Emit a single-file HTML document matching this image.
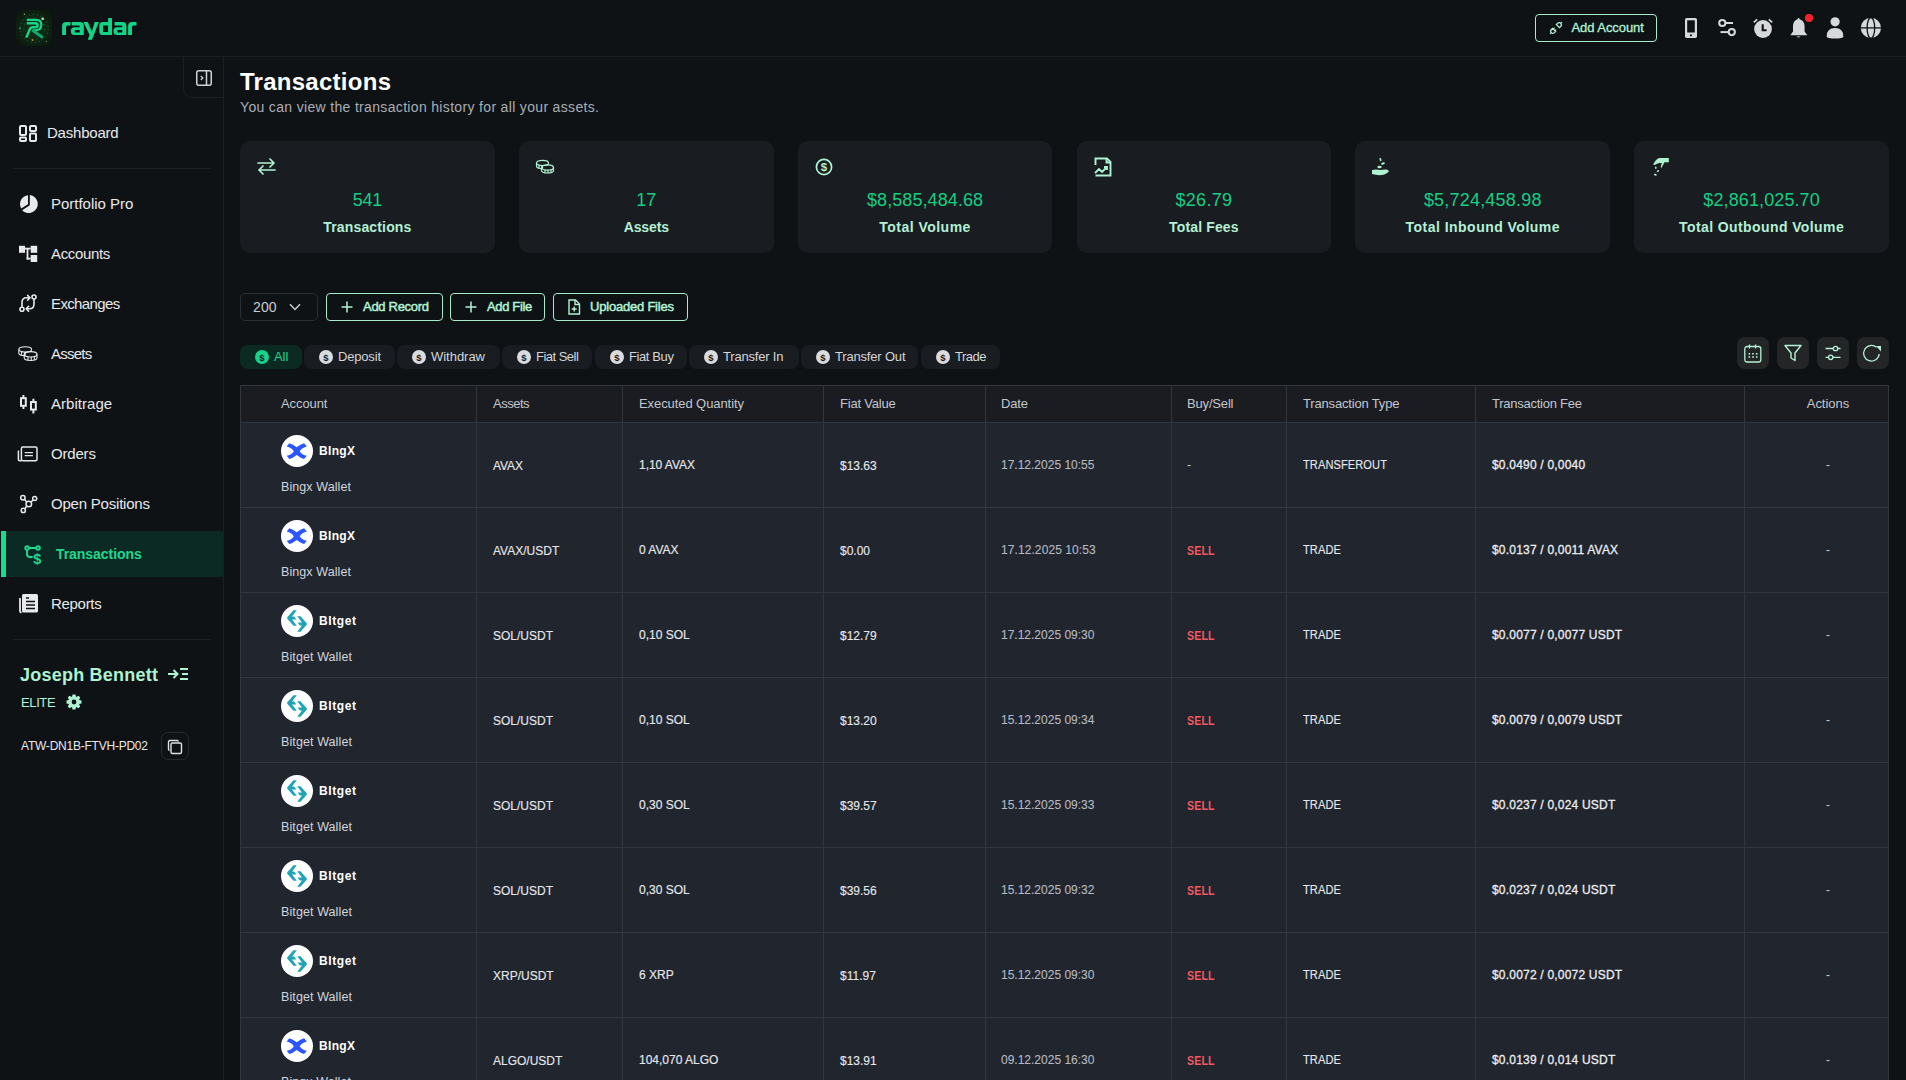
<!DOCTYPE html>
<html><head><meta charset="utf-8">
<style>
*{box-sizing:border-box;margin:0;padding:0}
html,body{width:1906px;height:1080px;overflow:hidden;background:#0e1215;font-family:"Liberation Sans", sans-serif;position:relative}
.a{position:absolute}
.t{position:absolute;white-space:nowrap}
svg{display:block;overflow:visible}
</style></head><body>
<div class="a" style="left:0px;top:56px;width:1906px;height:1px;background:#1c1f22"></div>
<svg class="a" style="left:16px;top:10px;" width="36" height="36" viewBox="0 0 36 36">
<defs><radialGradient id="lg" cx="50%" cy="50%" r="65%"><stop offset="0" stop-color="#11361a"/><stop offset="1" stop-color="#0a170d"/></radialGradient></defs>
<rect x="0" y="0" width="36" height="36" rx="8" fill="url(#lg)"/>
<circle cx="18.2" cy="18.6" r="14" fill="none" stroke="#1a8a4c" stroke-width="0.7" stroke-dasharray="1.5 2.5" opacity="0.8"/>
<circle cx="18.2" cy="18.6" r="10.5" fill="none" stroke="#16703e" stroke-width="0.6" stroke-dasharray="3 3" opacity="0.7"/>
<path d="M10.8 9.9 H20.5 Q25.3 9.9 25.3 15 Q25.3 20.2 19.5 20.2 H16.5" fill="none" stroke="#17d68b" stroke-width="2.1"/>
<path d="M10.8 13.3 H19.3 Q21.6 13.3 21.6 15.3 Q21.6 17.3 19.3 17.3 H16.8 Q14.6 17.3 13.8 19.2 L10.3 27.6" fill="none" stroke="#17d68b" stroke-width="2.4"/>
<path d="M16.5 20.2 L26.8 27.6" fill="none" stroke="#13a86c" stroke-width="3"/>
<circle cx="26.7" cy="8.7" r="1.3" fill="#d8f0d8" opacity="0.9"/><circle cx="8.4" cy="4.3" r="0.8" fill="#9fc99f" opacity="0.8"/><circle cx="3.9" cy="18.4" r="0.8" fill="#9fb79f" opacity="0.7"/>
<circle cx="16.5" cy="30" r="0.9" fill="#d88a20"/><circle cx="30.4" cy="31.5" r="0.7" fill="#8fa98f" opacity="0.7"/>
</svg>
<svg class="a" style="left:58px;top:14px;" width="82" height="28" viewBox="0 0 82 28"><g fill="#12d487" fill-rule="evenodd"><path d="M4.1 21.1 V12 Q4.1 8 8.3 8 H12.5 V11.6 H9.6 Q8 11.6 8 13.2 V21.1 Z"/><path d="M14 8 H22 Q25.8 8 25.8 11.8 V21.1 H16.5 Q12.9 21.1 12.9 17.6 V16.8 Q12.9 13.3 16.5 13.3 H21.7 V12.3 Q21.7 11.6 21 11.6 H14 Z M16.8 16.1 H21.7 V18.5 H16.8 Z"/><path d="M25.4 8 H29.7 L33.9 17.6 L36.6 8 H40.9 L34 25.8 H29.7 L31.6 21.1 Z"/><path d="M50.1 3.9 H54 V21.1 H45 Q41.3 21.1 41.3 17.4 V11.7 Q41.3 8 45 8 H50.1 Z M45 11.6 H50.1 V18 H45 Z"/><path transform="translate(42.6 0)" d="M14 8 H22 Q25.8 8 25.8 11.8 V21.1 H16.5 Q12.9 21.1 12.9 17.6 V16.8 Q12.9 13.3 16.5 13.3 H21.7 V12.3 Q21.7 11.6 21 11.6 H14 Z M16.8 16.1 H21.7 V18.5 H16.8 Z"/><path transform="translate(66 0)" d="M4.1 21.1 V12 Q4.1 8 8.3 8 H12.5 V11.6 H9.6 Q8 11.6 8 13.2 V21.1 Z"/></g></svg>
<div class="a" style="left:1535px;top:14px;width:122px;height:28px;border:1px solid #a6eccb;border-radius:4px"></div>
<svg class="a" style="left:1548px;top:20px;" width="16" height="16" viewBox="0 0 16 16"><g transform="scale(0.8) rotate(-45 10 10)" fill="none" stroke="#b3f2d6" stroke-width="1.5" stroke-linecap="round"><path d="M4.6 7.2 H6.6 V12.8 H4.6 A2.8 2.8 0 0 1 4.6 7.2 Z"/><path d="M1.8 10 H0"/><path d="M6.6 8.6 H8.2 M6.6 11.4 H8.2"/><path d="M13.4 7.2 H15.4 A2.8 2.8 0 0 1 15.4 12.8 H13.4 Z"/><path d="M18.2 10 H20"/></g></svg>
<div class="t" style="left:1571.5px;top:21.00px;font-size:13px;line-height:13px;color:#b3f2d6;font-weight:normal;-webkit-text-stroke:0.3px #b3f2d6;letter-spacing:-0.060px">Add Account</div>
<svg class="a" style="left:1685px;top:18px;" width="12" height="20" viewBox="0 0 12 20"><rect x="0" y="0" width="12" height="20" rx="1.8" fill="#d6d8dc"/><rect x="2.2" y="2.3" width="7.6" height="12.2" fill="#0e1115"/><circle cx="6" cy="17.3" r="1.1" fill="#0e1115"/></svg>
<svg class="a" style="left:1717px;top:18px;" width="20" height="20" viewBox="0 0 20 20"><circle cx="5.3" cy="5" r="3.1" fill="none" stroke="#d6d8dc" stroke-width="2"/><path d="M8.4 5 H16" stroke="#d6d8dc" stroke-width="2"/><circle cx="14.8" cy="14.1" r="3.1" fill="none" stroke="#d6d8dc" stroke-width="2"/><path d="M3.5 14.1 H11.7" stroke="#d6d8dc" stroke-width="2"/></svg>
<svg class="a" style="left:1752px;top:17px;" width="22" height="22" viewBox="0 0 22 22"><circle cx="11" cy="12" r="8.9" fill="#d6d8dc"/><path d="M10.7 7.2 V13.3 H14.6" fill="none" stroke="#0e1115" stroke-width="2.1"/><path d="M1.8 5.4 L5.2 2.4 M20.2 5.4 L16.8 2.4" fill="none" stroke="#d6d8dc" stroke-width="1.7"/></svg>
<svg class="a" style="left:1790px;top:17px;" width="18" height="21" viewBox="0 0 18 21"><path d="M8.5 1 Q9.5 1 9.6 2.2 Q14.5 3.5 14.6 9.5 V14.5 L17.3 18.2 H0.3 L3 14.5 V9.5 Q3 3.5 7.5 2.2 Q7.6 1 8.5 1 Z" fill="#d6d8dc"/><path d="M6.5 19.4 Q8.5 21.6 10.5 19.4 Z" fill="#d6d8dc"/></svg>
<svg class="a" style="left:1805px;top:14px;" width="8" height="8" viewBox="0 0 8 8"><circle cx="4" cy="4" r="4.1" fill="#f5222d"/></svg>
<svg class="a" style="left:1826px;top:17px;" width="18" height="22" viewBox="0 0 18 22"><circle cx="9.1" cy="4.8" r="4.6" fill="#d6d8dc"/><path d="M0.7 19.5 Q0.5 11 9 11 Q17.5 11 17.3 19.5 Q17 21.6 9 21.6 Q1 21.6 0.7 19.5 Z" fill="#d6d8dc"/></svg>
<svg class="a" style="left:1860px;top:17px;" width="22" height="22" viewBox="0 0 22 22"><circle cx="10.9" cy="10.9" r="10.1" fill="#d6d8dc"/><path d="M0.5 10.9 H21.5" stroke="#0e1115" stroke-width="1.3"/><ellipse cx="10.9" cy="10.9" rx="3.8" ry="10.4" fill="none" stroke="#0e1115" stroke-width="1.3"/></svg>
<div class="a" style="left:223px;top:57px;width:1px;height:1023px;background:#1c1f22"></div>
<div class="a" style="left:183px;top:56px;width:41px;height:42px;border-left:1px solid #1c1f22;border-bottom:1px solid #1c1f22;border-bottom-left-radius:9px"></div>
<svg class="a" style="left:196px;top:70px;" width="16" height="16" viewBox="0 0 16 16"><rect x="0.75" y="0.75" width="14.5" height="14.5" rx="2" fill="none" stroke="#d0d2d6" stroke-width="1.5"/><path d="M10.5 1 V15" stroke="#d0d2d6" stroke-width="1.5"/><path d="M4.8 6 L6.8 8 L4.8 10" fill="none" stroke="#d0d2d6" stroke-width="1.3"/></svg>
<svg class="a" style="left:19px;top:125px;" width="18" height="17" viewBox="0 0 18 17"><g fill="none" stroke="#e8e9ec" stroke-width="2"><rect x="1" y="1" width="6" height="9" rx="1"/><rect x="11" y="1" width="6" height="5" rx="1"/><rect x="1" y="12.5" width="6" height="3.5" rx="1"/><rect x="11" y="8.5" width="6" height="7.5" rx="1"/></g></svg>
<div class="t" style="left:47px;top:125.10px;font-size:15px;line-height:15px;color:#e8e9ec;font-weight:normal;;letter-spacing:-0.211px">Dashboard</div>
<svg class="a" style="left:19px;top:194px;" width="20" height="20" viewBox="0 0 20 20"><path d="M9 1.2 V10.3 L2.2 14.6 A9 9 0 0 1 9 1.2 Z" fill="#e8e9ec"/><path d="M10.8 1.1 A9 9 0 1 1 3.2 16.2 L10.8 11.3 Z" fill="#e8e9ec"/></svg>
<div class="t" style="left:51px;top:196.30px;font-size:15px;line-height:15px;color:#e8e9ec;font-weight:normal;;letter-spacing:-0.021px">Portfolio Pro</div>
<svg class="a" style="left:19px;top:245px;" width="19" height="18" viewBox="0 0 19 18"><g fill="#e8e9ec"><rect x="0" y="0.8" width="6" height="7"/><rect x="11.7" y="0.8" width="6.5" height="7"/><rect x="11.7" y="10" width="6.5" height="7"/><rect x="6" y="2.7" width="5.7" height="1.8"/><rect x="7.6" y="4" width="1.8" height="10.5"/><rect x="7.6" y="12.7" width="4.1" height="1.8"/></g></svg>
<div class="t" style="left:51px;top:246.30px;font-size:15px;line-height:15px;color:#e8e9ec;font-weight:normal;;letter-spacing:-0.358px">Accounts</div>
<svg class="a" style="left:19px;top:294px;" width="18" height="19" viewBox="0 0 18 19"><g fill="none" stroke="#e8e9ec" stroke-width="1.6" stroke-linecap="round" stroke-linejoin="round"><circle cx="3" cy="15.2" r="2"/><circle cx="15" cy="3" r="2"/><path d="M3 13 V8.5 Q3 3.8 7.5 3.8 H10.8 M8.6 1.4 L11 3.8 L8.6 6.2"/><path d="M15 5.2 V10 Q15 14.8 10.5 14.8 H7.3 M9.6 12.4 L7.2 14.8 L9.6 17.2"/></g></svg>
<div class="t" style="left:51px;top:296.30px;font-size:15px;line-height:15px;color:#e8e9ec;font-weight:normal;;letter-spacing:-0.627px">Exchanges</div>
<svg class="a" style="left:18px;top:346px;" width="20" height="16" viewBox="0 0 20 16"><g fill="none" stroke="#e8e9ec" stroke-width="1.1"><ellipse cx="7.2" cy="3.4" rx="6.4" ry="2.7"/><path d="M0.8 3.4 V6.9 Q0.8 9.6 7.2 9.6"/><ellipse cx="12.6" cy="8.3" rx="6.4" ry="2.7"/><path d="M6.2 8.3 V11.8 Q6.2 14.5 12.6 14.5 Q19 14.5 19 11.8 V8.3"/><path d="M3.5 5.8 V8.8 M7.2 6.1 V9.4 M10 11 V14.2 M13.2 11 V14.4 M16.4 10.6 V13.8"/></g></svg>
<div class="t" style="left:51px;top:346.30px;font-size:15px;line-height:15px;color:#e8e9ec;font-weight:normal;;letter-spacing:-0.763px">Assets</div>
<svg class="a" style="left:20px;top:395px;" width="17" height="19" viewBox="0 0 17 19"><g fill="none" stroke="#e8e9ec" stroke-width="2"><rect x="1" y="3.2" width="4.8" height="7.6"/><path d="M3.4 0 V3.2 M3.4 10.8 V14"/><rect x="11" y="7" width="4.8" height="7.6"/><path d="M13.4 3.8 V7 M13.4 14.6 V18.5"/></g></svg>
<div class="t" style="left:51px;top:396.30px;font-size:15px;line-height:15px;color:#e8e9ec;font-weight:normal;;letter-spacing:0.041px">Arbitrage</div>
<svg class="a" style="left:17px;top:446px;" width="21" height="16" viewBox="0 0 21 16"><g fill="none" stroke="#e8e9ec" stroke-width="1.5"><rect x="4.4" y="1" width="15.6" height="13.7" rx="1.5"/><path d="M4.4 14.7 H2.6 Q1.4 14.7 1.4 13.5 V4.4"/><path d="M7.7 6.6 H15.9 M7.7 9.6 H15.9" stroke-width="1.3"/></g></svg>
<div class="t" style="left:51px;top:446.30px;font-size:15px;line-height:15px;color:#e8e9ec;font-weight:normal;;letter-spacing:-0.189px">Orders</div>
<svg class="a" style="left:19px;top:494px;" width="20" height="20" viewBox="0 0 20 20"><g fill="none" stroke="#e8e9ec" stroke-width="1.5"><circle cx="3.9" cy="3.8" r="2.2"/><circle cx="15.7" cy="4.5" r="2"/><circle cx="9.8" cy="10" r="2.8"/><circle cx="4.3" cy="16.4" r="2.1"/><path d="M5.5 5.4 L7.8 8 M14.2 6 L11.9 8.1 M7.9 12 L5.8 14.8"/></g></svg>
<div class="t" style="left:51px;top:496.30px;font-size:15px;line-height:15px;color:#e8e9ec;font-weight:normal;;letter-spacing:-0.210px">Open Positions</div>
<div class="a" style="left:1px;top:531px;width:222px;height:46px;background:#0c2a24"></div>
<div class="a" style="left:1px;top:531px;width:5px;height:46px;background:#17dd90"></div>
<svg class="a" style="left:24px;top:545px;" width="20" height="20" viewBox="0 0 20 20"><g fill="none" stroke="#1ed98f" stroke-width="1.9" stroke-linecap="round"><circle cx="3" cy="3" r="1.8"/><circle cx="14" cy="3" r="1.8"/><path d="M4.8 3 H12.2 M3 4.8 V9 Q3 12 6 12 H8"/></g><text x="9.3" y="18.5" font-family="Liberation Sans" font-weight="bold" font-size="14.5" fill="#1ed98f">$</text></svg>
<div class="t" style="left:56px;top:547.15px;font-size:14px;line-height:14px;color:#1ed98f;font-weight:bold;;letter-spacing:-0.052px">Transactions</div>
<svg class="a" style="left:19px;top:594px;" width="19" height="19" viewBox="0 0 19 19"><rect x="3" y="0" width="16" height="18.5" rx="1.5" fill="#e8e9ec"/><path d="M1 4 V17 Q1 18.5 2.5 18.5" fill="none" stroke="#e8e9ec" stroke-width="1.8"/><g stroke="#0e1115" stroke-width="1.6"><path d="M7 4 H10 M7 7.5 H16 M7 11 H16 M7 14.5 H16"/></g></svg>
<div class="t" style="left:51px;top:596.30px;font-size:15px;line-height:15px;color:#e8e9ec;font-weight:normal;;letter-spacing:-0.305px">Reports</div>
<div class="a" style="left:13px;top:168px;width:198px;height:1px;background:#1e2126"></div>
<div class="a" style="left:13px;top:639px;width:198px;height:1px;background:#1e2126"></div>
<div class="t" style="left:20px;top:665.76px;font-size:18px;line-height:18px;color:#aef2d2;font-weight:bold;;letter-spacing:0.228px">Joseph Bennett</div>
<svg class="a" style="left:168px;top:668px;" width="21" height="12" viewBox="0 0 21 12"><g fill="none" stroke="#aef2d2" stroke-width="2"><path d="M0 6 H9 M5.5 2 L9.5 6 L5.5 10"/><path d="M12 1 H20 M14 6 H20 M12 11 H20"/></g></svg>
<div class="t" style="left:21px;top:696.00px;font-size:13px;line-height:13px;color:#aef2d2;font-weight:normal;;letter-spacing:-0.381px">ELITE</div>
<svg class="a" style="left:66px;top:694px;" width="16" height="16" viewBox="0 0 16 16"><g fill="#aef2d2"><circle cx="8" cy="8" r="5.2"/><path d="M6.5 0.5 H9.5 L10 3 L12.5 1.8 L14.2 3.5 L13 6 L15.5 6.5 V9.5 L13 10 L14.2 12.5 L12.5 14.2 L10 13 L9.5 15.5 H6.5 L6 13 L3.5 14.2 L1.8 12.5 L3 10 L0.5 9.5 V6.5 L3 6 L1.8 3.5 L3.5 1.8 L6 3 Z"/></g><circle cx="8" cy="8" r="2.4" fill="#0e1115"/></svg>
<div class="t" style="left:21px;top:739.84px;font-size:12px;line-height:12px;color:#e8e9ec;font-weight:normal;;letter-spacing:-0.230px">ATW-DN1B-FTVH-PD02</div>
<div class="a" style="left:161px;top:732px;width:28px;height:28px;border:1px solid #272a2f;border-radius:7px"></div>
<svg class="a" style="left:167px;top:739px;" width="16" height="16" viewBox="0 0 16 16"><g fill="none" stroke="#e0e2e5" stroke-width="1.4"><rect x="4" y="4" width="10.5" height="10.5" rx="1.5"/><path d="M11.5 2.5 Q11 1.5 10 1.5 H3 Q1.5 1.5 1.5 3 V10 Q1.5 11 2.5 11.5"/></g></svg>
<div class="t" style="left:240px;top:69.68px;font-size:24px;line-height:24px;color:#ffffff;font-weight:bold;;letter-spacing:0.267px">Transactions</div>
<div class="t" style="left:240px;top:99.65px;font-size:14px;line-height:14px;color:#a9aeb6;font-weight:normal;;letter-spacing:0.333px">You can view the transaction history for all your assets.</div>
<div class="a" style="left:240.00px;top:141px;width:254.83px;height:112px;background:#191c20;border-radius:10px"></div>
<div class="t" style="left:167.41666666666669px;width:400px;text-align:center;top:190.76px;font-size:18px;line-height:18px;color:#14cf85;font-weight:normal;;letter-spacing:-0.273px">541</div>
<div class="t" style="left:167.41666666666669px;width:400px;text-align:center;top:220.15px;font-size:14px;line-height:14px;color:#b3f0d6;font-weight:bold;;letter-spacing:0.148px">Transactions</div>
<svg class="a" style="left:257.0px;top:157px;" width="19" height="19" viewBox="0 0 19 19"><g fill="none" stroke="#aef2d2" stroke-width="1.7" stroke-linecap="round" stroke-linejoin="round"><path d="M1 6 H17 M13 2 L17 6 L13 10"/><path d="M18 13 H2 M6 9 L2 13 L6 17"/></g></svg>
<div class="a" style="left:518.83px;top:141px;width:254.83px;height:112px;background:#191c20;border-radius:10px"></div>
<div class="t" style="left:446.25px;width:400px;text-align:center;top:190.76px;font-size:18px;line-height:18px;color:#14cf85;font-weight:normal;">17</div>
<div class="t" style="left:446.25px;width:400px;text-align:center;top:220.15px;font-size:14px;line-height:14px;color:#b3f0d6;font-weight:bold;;letter-spacing:-0.124px">Assets</div>
<svg class="a" style="left:534.8333333333334px;top:159px;" width="22" height="16" viewBox="0 0 22 16"><g fill="none" stroke="#aef2d2" stroke-width="1.2"><ellipse cx="7.5" cy="4" rx="6" ry="2.6"/><path d="M1.5 4 V7 Q1.5 9.6 7.5 9.6"/><ellipse cx="12.5" cy="8.5" rx="6" ry="2.6"/><path d="M6.5 8.5 V11.5 Q6.5 14 12.5 14 Q18.5 14 18.5 11.5 V8.5"/><path d="M4 6 V9 M7.5 6.6 V9.6 M10 10.5 V13.5 M13 11 V14 M16 10.5 V13.5"/></g></svg>
<div class="a" style="left:797.67px;top:141px;width:254.83px;height:112px;background:#191c20;border-radius:10px"></div>
<div class="t" style="left:725.0833333333334px;width:400px;text-align:center;top:190.76px;font-size:18px;line-height:18px;color:#14cf85;font-weight:normal;;letter-spacing:0.090px">$8,585,484.68</div>
<div class="t" style="left:725.0833333333334px;width:400px;text-align:center;top:220.15px;font-size:14px;line-height:14px;color:#b3f0d6;font-weight:bold;;letter-spacing:0.470px">Total Volume</div>
<svg class="a" style="left:814.6666666666667px;top:158px;" width="18" height="18" viewBox="0 0 18 18"><circle cx="9" cy="9" r="7.6" fill="none" stroke="#aef2d2" stroke-width="1.7"/><text x="9" y="13.3" text-anchor="middle" font-family="Liberation Sans" font-weight="bold" font-size="11.5" fill="#aef2d2">$</text></svg>
<div class="a" style="left:1076.50px;top:141px;width:254.83px;height:112px;background:#191c20;border-radius:10px"></div>
<div class="t" style="left:1003.9166666666667px;width:400px;text-align:center;top:190.76px;font-size:18px;line-height:18px;color:#14cf85;font-weight:normal;;letter-spacing:0.287px">$26.79</div>
<div class="t" style="left:1003.9166666666667px;width:400px;text-align:center;top:220.15px;font-size:14px;line-height:14px;color:#b3f0d6;font-weight:bold;;letter-spacing:0.144px">Total Fees</div>
<svg class="a" style="left:1093.5px;top:157px;" width="18" height="20" viewBox="0 0 18 20"><g fill="none" stroke="#aef2d2" stroke-width="1.9"><path d="M1.5 8 V1.5 H13 L16.5 5 V18.5 H1.5"/><path d="M12.5 1.5 V5.5 H16.5"/><path d="M1 16 L5 12 L8 15 L13 10 M10 10 H13 V13"/></g></svg>
<div class="a" style="left:1355.33px;top:141px;width:254.83px;height:112px;background:#191c20;border-radius:10px"></div>
<div class="t" style="left:1282.7500000000002px;width:400px;text-align:center;top:190.76px;font-size:18px;line-height:18px;color:#14cf85;font-weight:normal;;letter-spacing:0.198px">$5,724,458.98</div>
<div class="t" style="left:1282.7500000000002px;width:400px;text-align:center;top:220.15px;font-size:14px;line-height:14px;color:#b3f0d6;font-weight:bold;;letter-spacing:0.478px">Total Inbound Volume</div>
<svg class="a" style="left:1371.3333333333335px;top:157px;" width="20" height="20" viewBox="0 0 20 20"><g fill="#aef2d2"><path d="M1 13 Q5 12 9 13 L14 12.5 Q17 12 18 14 Q16 17 11 18 Q6 18.5 1 17 Z"/><ellipse cx="8.5" cy="10" rx="2.2" ry="1.2"/><ellipse cx="12" cy="6.5" rx="2" ry="1" transform="rotate(-25 12 6.5)"/><ellipse cx="9.5" cy="2.5" rx="0.9" ry="1.9" transform="rotate(-15 9.5 2.5)"/></g></svg>
<div class="a" style="left:1634.17px;top:141px;width:254.83px;height:112px;background:#191c20;border-radius:10px"></div>
<div class="t" style="left:1561.5833333333337px;width:400px;text-align:center;top:190.76px;font-size:18px;line-height:18px;color:#14cf85;font-weight:normal;;letter-spacing:0.115px">$2,861,025.70</div>
<div class="t" style="left:1561.5833333333337px;width:400px;text-align:center;top:220.15px;font-size:14px;line-height:14px;color:#b3f0d6;font-weight:bold;;letter-spacing:0.406px">Total Outbound Volume</div>
<svg class="a" style="left:1651.166666666667px;top:157px;" width="20" height="20" viewBox="0 0 20 20"><g fill="#aef2d2"><path d="M8.4 0.9 H17.8 V5.3 H13.5 L10.5 10.8 Q9.5 11 9.8 9.5 L10.8 6 Q8 5.5 5.5 7 Q3 8.5 2.2 7.5 Q4.5 2 8.4 0.9 Z"/><ellipse cx="4.8" cy="10.8" rx="0.8" ry="1.3"/><ellipse cx="6.9" cy="14.1" rx="1.3" ry="0.8" transform="rotate(-30 6.9 14.1)"/><ellipse cx="4.3" cy="17.7" rx="1.4" ry="0.9" transform="rotate(20 4.3 17.7)"/></g></svg>
<div class="a" style="left:240px;top:293px;width:78px;height:28px;border:1px solid #2b2e33;border-radius:5px"></div>
<div class="t" style="left:253px;top:300.15px;font-size:14px;line-height:14px;color:#c9ccd1;font-weight:normal;;letter-spacing:0.120px">200</div>
<svg class="a" style="left:289px;top:303px;" width="12" height="8" viewBox="0 0 12 8"><path d="M1 1.2 L6 6.5 L11 1.2" fill="none" stroke="#c9ccd1" stroke-width="1.5"/></svg>
<div class="a" style="left:326px;top:293px;width:117px;height:28px;border:1px solid #a6eccb;border-radius:4px"></div>
<svg class="a" style="left:341px;top:301px;" width="12" height="12" viewBox="0 0 12 12"><path d="M6 0.5 V11.5 M0.5 6 H11.5" stroke="#b3f2d6" stroke-width="1.5"/></svg>
<div class="t" style="left:363px;top:299.80px;font-size:13px;line-height:13px;color:#b3f2d6;font-weight:normal;-webkit-text-stroke:0.45px #b3f2d6;letter-spacing:-0.295px">Add Record</div>
<div class="a" style="left:450px;top:293px;width:95px;height:28px;border:1px solid #a6eccb;border-radius:4px"></div>
<svg class="a" style="left:465px;top:301px;" width="12" height="12" viewBox="0 0 12 12"><path d="M6 0.5 V11.5 M0.5 6 H11.5" stroke="#b3f2d6" stroke-width="1.5"/></svg>
<div class="t" style="left:487px;top:299.80px;font-size:13px;line-height:13px;color:#b3f2d6;font-weight:normal;-webkit-text-stroke:0.45px #b3f2d6;letter-spacing:-0.343px">Add File</div>
<div class="a" style="left:553px;top:293px;width:135px;height:28px;border:1px solid #a6eccb;border-radius:4px"></div>
<svg class="a" style="left:567px;top:299px;" width="14" height="16" viewBox="0 0 14 16"><g fill="none" stroke="#b3f2d6" stroke-width="1.4"><path d="M2 1 H8.5 L12.5 5 V15 H2 Z"/><path d="M8 1 V5.5 H12.5"/><path d="M7.2 7.5 V12.5 M4.7 10 H9.7"/></g></svg>
<div class="t" style="left:590px;top:299.80px;font-size:13px;line-height:13px;color:#b3f2d6;font-weight:normal;-webkit-text-stroke:0.45px #b3f2d6;letter-spacing:-0.209px">Uploaded Files</div>
<div class="a" style="left:240px;top:345px;width:62px;height:24px;background:#0b2a22;border-radius:8px"></div>
<svg class="a" style="left:255px;top:350px;" width="14" height="14" viewBox="0 0 14 14"><circle cx="7" cy="7" r="7" fill="#17d28a"/><text x="7" y="10.6" text-anchor="middle" font-family="Liberation Sans" font-weight="bold" font-size="9.5" fill="#1a1d21">$</text></svg>
<div class="t" style="left:274px;top:350.00px;font-size:13px;line-height:13px;color:#19d68c;font-weight:normal;;letter-spacing:-0.077px">All</div>
<div class="a" style="left:304px;top:345px;width:91px;height:24px;background:#191c20;border-radius:8px"></div>
<svg class="a" style="left:319px;top:350px;" width="14" height="14" viewBox="0 0 14 14"><circle cx="7" cy="7" r="7" fill="#d9dbde"/><text x="7" y="10.6" text-anchor="middle" font-family="Liberation Sans" font-weight="bold" font-size="9.5" fill="#1a1d21">$</text></svg>
<div class="t" style="left:338px;top:350.00px;font-size:13px;line-height:13px;color:#d3d6db;font-weight:normal;;letter-spacing:-0.180px">Deposit</div>
<div class="a" style="left:397px;top:345px;width:103px;height:24px;background:#191c20;border-radius:8px"></div>
<svg class="a" style="left:412px;top:350px;" width="14" height="14" viewBox="0 0 14 14"><circle cx="7" cy="7" r="7" fill="#d9dbde"/><text x="7" y="10.6" text-anchor="middle" font-family="Liberation Sans" font-weight="bold" font-size="9.5" fill="#1a1d21">$</text></svg>
<div class="t" style="left:431px;top:350.00px;font-size:13px;line-height:13px;color:#d3d6db;font-weight:normal;;letter-spacing:-0.027px">Withdraw</div>
<div class="a" style="left:502px;top:345px;width:90px;height:24px;background:#191c20;border-radius:8px"></div>
<svg class="a" style="left:517px;top:350px;" width="14" height="14" viewBox="0 0 14 14"><circle cx="7" cy="7" r="7" fill="#d9dbde"/><text x="7" y="10.6" text-anchor="middle" font-family="Liberation Sans" font-weight="bold" font-size="9.5" fill="#1a1d21">$</text></svg>
<div class="t" style="left:536px;top:350.00px;font-size:13px;line-height:13px;color:#d3d6db;font-weight:normal;;letter-spacing:-0.521px">Fiat Sell</div>
<div class="a" style="left:595px;top:345px;width:92px;height:24px;background:#191c20;border-radius:8px"></div>
<svg class="a" style="left:610px;top:350px;" width="14" height="14" viewBox="0 0 14 14"><circle cx="7" cy="7" r="7" fill="#d9dbde"/><text x="7" y="10.6" text-anchor="middle" font-family="Liberation Sans" font-weight="bold" font-size="9.5" fill="#1a1d21">$</text></svg>
<div class="t" style="left:629px;top:350.00px;font-size:13px;line-height:13px;color:#d3d6db;font-weight:normal;;letter-spacing:-0.398px">Fiat Buy</div>
<div class="a" style="left:689px;top:345px;width:110px;height:24px;background:#191c20;border-radius:8px"></div>
<svg class="a" style="left:704px;top:350px;" width="14" height="14" viewBox="0 0 14 14"><circle cx="7" cy="7" r="7" fill="#d9dbde"/><text x="7" y="10.6" text-anchor="middle" font-family="Liberation Sans" font-weight="bold" font-size="9.5" fill="#1a1d21">$</text></svg>
<div class="t" style="left:723px;top:350.00px;font-size:13px;line-height:13px;color:#d3d6db;font-weight:normal;;letter-spacing:-0.188px">Transfer In</div>
<div class="a" style="left:801px;top:345px;width:117px;height:24px;background:#191c20;border-radius:8px"></div>
<svg class="a" style="left:816px;top:350px;" width="14" height="14" viewBox="0 0 14 14"><circle cx="7" cy="7" r="7" fill="#d9dbde"/><text x="7" y="10.6" text-anchor="middle" font-family="Liberation Sans" font-weight="bold" font-size="9.5" fill="#1a1d21">$</text></svg>
<div class="t" style="left:835px;top:350.00px;font-size:13px;line-height:13px;color:#d3d6db;font-weight:normal;;letter-spacing:-0.180px">Transfer Out</div>
<div class="a" style="left:921px;top:345px;width:79px;height:24px;background:#191c20;border-radius:8px"></div>
<svg class="a" style="left:936px;top:350px;" width="14" height="14" viewBox="0 0 14 14"><circle cx="7" cy="7" r="7" fill="#d9dbde"/><text x="7" y="10.6" text-anchor="middle" font-family="Liberation Sans" font-weight="bold" font-size="9.5" fill="#1a1d21">$</text></svg>
<div class="t" style="left:955px;top:350.00px;font-size:13px;line-height:13px;color:#d3d6db;font-weight:normal;;letter-spacing:-0.496px">Trade</div>
<div class="a" style="left:1737px;top:337px;width:32px;height:32px;background:#242527;border-radius:8px"></div>
<svg class="a" style="left:1744px;top:344px;" width="18" height="19" viewBox="0 0 18 19"><g fill="none" stroke="#b3f2d6" stroke-width="1.3"><rect x="0.8" y="2.5" width="16" height="15.5" rx="2.2"/><path d="M5.5 0.5 V4.5 M11.5 0.5 V4.5"/></g><g fill="#b3f2d6"><rect x="4.5" y="9" width="1.6" height="1.6"/><rect x="8.2" y="9" width="1.6" height="1.6"/><rect x="11.9" y="9" width="1.6" height="1.6"/><rect x="4.5" y="12.2" width="1.6" height="1.6"/><rect x="8.2" y="12.2" width="1.6" height="1.6"/><rect x="11.9" y="12.2" width="1.6" height="1.6"/></g></svg>
<div class="a" style="left:1777px;top:337px;width:32px;height:32px;background:#242527;border-radius:8px"></div>
<svg class="a" style="left:1784px;top:344px;" width="18" height="18" viewBox="0 0 18 18"><path d="M1 1.5 H17 L11 9 V16.5 L7 14 V9 Z" fill="none" stroke="#b3f2d6" stroke-width="1.4" stroke-linejoin="round"/></svg>
<div class="a" style="left:1817px;top:337px;width:32px;height:32px;background:#242527;border-radius:8px"></div>
<svg class="a" style="left:1825px;top:345px;" width="16" height="15" viewBox="0 0 16 15"><g fill="none" stroke="#b3f2d6" stroke-width="1.3"><path d="M0.5 3.5 H8.3 M12.7 3.5 H15.5 M0.5 12.3 H3.5 M7.9 12.3 H15.5"/><circle cx="10.5" cy="3.5" r="2.2"/><circle cx="5.7" cy="12.3" r="2.2"/></g></svg>
<div class="a" style="left:1857px;top:337px;width:32px;height:32px;background:#242527;border-radius:8px"></div>
<svg class="a" style="left:1863px;top:344px;" width="19" height="18" viewBox="0 0 19 18"><path d="M16.2 10 A7.8 7.8 0 1 1 13.5 3.3" fill="none" stroke="#b3f2d6" stroke-width="1.3"/><path d="M13 2 L18 2 L18 7.5 Z" fill="#b3f2d6"/></svg>
<div class="a" style="left:240px;top:385px;width:1649px;height:37px;background:#1a1c21"></div>
<div class="a" style="left:240px;top:422px;width:1649px;height:658px;background:#21252e"></div>
<div class="a" style="left:240px;top:385px;width:1649px;height:1px;background:#32363e"></div>
<div class="a" style="left:240px;top:422px;width:1649px;height:1px;background:#32363e"></div>
<div class="a" style="left:240px;top:385px;width:1px;height:695px;background:#32363e"></div>
<div class="a" style="left:1888px;top:385px;width:1px;height:695px;background:#32363e"></div>
<div class="a" style="left:476px;top:385px;width:1px;height:695px;background:#32363e"></div>
<div class="a" style="left:622px;top:385px;width:1px;height:695px;background:#32363e"></div>
<div class="a" style="left:823px;top:385px;width:1px;height:695px;background:#32363e"></div>
<div class="a" style="left:985px;top:385px;width:1px;height:695px;background:#32363e"></div>
<div class="a" style="left:1171px;top:385px;width:1px;height:695px;background:#32363e"></div>
<div class="a" style="left:1286px;top:385px;width:1px;height:695px;background:#32363e"></div>
<div class="a" style="left:1475px;top:385px;width:1px;height:695px;background:#32363e"></div>
<div class="a" style="left:1744px;top:385px;width:1px;height:695px;background:#32363e"></div>
<div class="a" style="left:240px;top:507px;width:1649px;height:1px;background:#32363e"></div>
<div class="a" style="left:240px;top:592px;width:1649px;height:1px;background:#32363e"></div>
<div class="a" style="left:240px;top:677px;width:1649px;height:1px;background:#32363e"></div>
<div class="a" style="left:240px;top:762px;width:1649px;height:1px;background:#32363e"></div>
<div class="a" style="left:240px;top:847px;width:1649px;height:1px;background:#32363e"></div>
<div class="a" style="left:240px;top:932px;width:1649px;height:1px;background:#32363e"></div>
<div class="a" style="left:240px;top:1017px;width:1649px;height:1px;background:#32363e"></div>
<div class="a" style="left:240px;top:1102px;width:1649px;height:1px;background:#32363e"></div>
<div class="t" style="left:281px;top:397.00px;font-size:13px;line-height:13px;color:#c3c7cd;font-weight:normal;;letter-spacing:-0.081px">Account</div>
<div class="t" style="left:493px;top:397.00px;font-size:13px;line-height:13px;color:#c3c7cd;font-weight:normal;;letter-spacing:-0.503px">Assets</div>
<div class="t" style="left:639px;top:397.00px;font-size:13px;line-height:13px;color:#c3c7cd;font-weight:normal;;letter-spacing:-0.077px">Executed Quantity</div>
<div class="t" style="left:840px;top:397.00px;font-size:13px;line-height:13px;color:#c3c7cd;font-weight:normal;;letter-spacing:-0.198px">Fiat Value</div>
<div class="t" style="left:1001px;top:397.00px;font-size:13px;line-height:13px;color:#c3c7cd;font-weight:normal;;letter-spacing:-0.156px">Date</div>
<div class="t" style="left:1187px;top:397.00px;font-size:13px;line-height:13px;color:#c3c7cd;font-weight:normal;;letter-spacing:-0.172px">Buy/Sell</div>
<div class="t" style="left:1303px;top:397.00px;font-size:13px;line-height:13px;color:#c3c7cd;font-weight:normal;;letter-spacing:-0.167px">Transaction Type</div>
<div class="t" style="left:1492px;top:397.00px;font-size:13px;line-height:13px;color:#c3c7cd;font-weight:normal;;letter-spacing:-0.247px">Transaction Fee</div>
<div class="t" style="left:1628.0px;width:400px;text-align:center;top:397.00px;font-size:13px;line-height:13px;color:#c3c7cd;font-weight:normal;;letter-spacing:-0.023px">Actions</div>
<svg class="a" style="left:281px;top:435px;" width="32" height="32" viewBox="0 0 32 32"><circle cx="16" cy="16" r="16" fill="#fff"/><path d="M5.7 11.5 L8.3 8.2 Q12 9 15.7 12.2 Q19.5 9 23.1 8.2 L25.9 11.5 Q21 12.5 18.7 16.3 Q21 20 25.9 20.8 L23.1 24.1 Q19.5 23 15.7 20 Q12 23 8.3 24.1 L5.7 20.8 Q10.5 20 12.8 16.3 Q10.5 12.5 5.7 11.5 Z" fill="#2b55ff"/></svg>
<div class="t" style="left:319px;top:444.84px;font-size:12px;line-height:12px;color:#ffffff;font-weight:bold;;letter-spacing:0.332px">BIngX</div>
<div class="t" style="left:281px;top:481.42px;font-size:12.5px;line-height:12.5px;color:#d2d6dc;font-weight:normal;;letter-spacing:0.089px">Bingx Wallet</div>
<div class="t" style="left:493px;top:459.84px;font-size:12px;line-height:12px;color:#e6e8ec;font-weight:normal;-webkit-text-stroke:0.12px #e6e8ec;letter-spacing:-0.078px">AVAX</div>
<div class="t" style="left:639px;top:458.84px;font-size:12px;line-height:12px;color:#e6e8ec;font-weight:normal;-webkit-text-stroke:0.15px #e6e8ec;letter-spacing:-0.033px">1,10 AVAX</div>
<div class="t" style="left:840px;top:459.84px;font-size:12px;line-height:12px;color:#e6e8ec;font-weight:normal;-webkit-text-stroke:0.12px #e6e8ec">$13.63</div>
<div class="t" style="left:1001px;top:458.84px;font-size:12px;line-height:12px;color:#b6bac0;font-weight:normal;-webkit-text-stroke:0.1px #b6bac0">17.12.2025 10:55</div>
<div class="t" style="left:1187px;top:458.84px;font-size:12px;line-height:12px;color:#c9ccd1;font-weight:normal;">-</div>
<div class="t" style="left:1303px;top:458.59px;font-size:12.3px;line-height:12.3px;color:#e6e8ec;font-weight:normal;-webkit-text-stroke:0.12px #e6e8ec;transform:scaleX(0.9);transform-origin:0 0;letter-spacing:0.1px">TRANSFEROUT</div>
<div class="t" style="left:1492px;top:458.84px;font-size:12px;line-height:12px;color:#eceef1;font-weight:normal;-webkit-text-stroke:0.28px #eceef1;letter-spacing:0.2px">$0.0490 / 0,0040</div>
<div class="t" style="left:1628.0px;width:400px;text-align:center;top:458.84px;font-size:12px;line-height:12px;color:#c9ccd1;font-weight:normal;">-</div>
<svg class="a" style="left:281px;top:520px;" width="32" height="32" viewBox="0 0 32 32"><circle cx="16" cy="16" r="16" fill="#fff"/><path d="M5.7 11.5 L8.3 8.2 Q12 9 15.7 12.2 Q19.5 9 23.1 8.2 L25.9 11.5 Q21 12.5 18.7 16.3 Q21 20 25.9 20.8 L23.1 24.1 Q19.5 23 15.7 20 Q12 23 8.3 24.1 L5.7 20.8 Q10.5 20 12.8 16.3 Q10.5 12.5 5.7 11.5 Z" fill="#2b55ff"/></svg>
<div class="t" style="left:319px;top:529.84px;font-size:12px;line-height:12px;color:#ffffff;font-weight:bold;;letter-spacing:0.332px">BIngX</div>
<div class="t" style="left:281px;top:566.42px;font-size:12.5px;line-height:12.5px;color:#d2d6dc;font-weight:normal;;letter-spacing:0.089px">Bingx Wallet</div>
<div class="t" style="left:493px;top:544.84px;font-size:12px;line-height:12px;color:#e6e8ec;font-weight:normal;-webkit-text-stroke:0.12px #e6e8ec">AVAX/USDT</div>
<div class="t" style="left:639px;top:543.84px;font-size:12px;line-height:12px;color:#e6e8ec;font-weight:normal;-webkit-text-stroke:0.15px #e6e8ec">0 AVAX</div>
<div class="t" style="left:840px;top:544.84px;font-size:12px;line-height:12px;color:#e6e8ec;font-weight:normal;-webkit-text-stroke:0.12px #e6e8ec">$0.00</div>
<div class="t" style="left:1001px;top:543.84px;font-size:12px;line-height:12px;color:#b6bac0;font-weight:normal;-webkit-text-stroke:0.1px #b6bac0;letter-spacing:0.085px">17.12.2025 10:53</div>
<div class="t" style="left:1187px;top:544.72px;font-size:12.5px;line-height:12.5px;color:#f5585e;font-weight:bold;transform:scaleX(0.845);transform-origin:0 0;letter-spacing:0.2px">SELL</div>
<div class="t" style="left:1303px;top:543.59px;font-size:12.3px;line-height:12.3px;color:#e6e8ec;font-weight:normal;-webkit-text-stroke:0.12px #e6e8ec;transform:scaleX(0.9);transform-origin:0 0;letter-spacing:0.1px">TRADE</div>
<div class="t" style="left:1492px;top:543.84px;font-size:12px;line-height:12px;color:#eceef1;font-weight:normal;-webkit-text-stroke:0.28px #eceef1;letter-spacing:0.2px">$0.0137 / 0,0011 AVAX</div>
<div class="t" style="left:1628.0px;width:400px;text-align:center;top:543.84px;font-size:12px;line-height:12px;color:#c9ccd1;font-weight:normal;">-</div>
<svg class="a" style="left:281px;top:605px;" width="32" height="32" viewBox="0 0 32 32"><circle cx="16" cy="16" r="16" fill="#fff"/><g fill="#1fa3b5"><path id="bgp" d="M12.5 5.2 H15.8 L11 11.5 H13.2 L15.4 14.5 H11 L15.8 20.8 H12.5 L6.3 13.8 Q5.8 12.9 6.3 12.2 Z"/><path d="M12.5 5.2 H15.8 L11 11.5 H13.2 L15.4 14.5 H11 L15.8 20.8 H12.5 L6.3 13.8 Q5.8 12.9 6.3 12.2 Z" transform="rotate(180 16 16)"/></g></svg>
<div class="t" style="left:319px;top:614.84px;font-size:12px;line-height:12px;color:#ffffff;font-weight:bold;letter-spacing:0.6px">BItget</div>
<div class="t" style="left:281px;top:651.42px;font-size:12.5px;line-height:12.5px;color:#d2d6dc;font-weight:normal;letter-spacing:0.1px">Bitget Wallet</div>
<div class="t" style="left:493px;top:629.84px;font-size:12px;line-height:12px;color:#e6e8ec;font-weight:normal;-webkit-text-stroke:0.12px #e6e8ec">SOL/USDT</div>
<div class="t" style="left:639px;top:628.84px;font-size:12px;line-height:12px;color:#e6e8ec;font-weight:normal;-webkit-text-stroke:0.15px #e6e8ec">0,10 SOL</div>
<div class="t" style="left:840px;top:629.84px;font-size:12px;line-height:12px;color:#e6e8ec;font-weight:normal;-webkit-text-stroke:0.12px #e6e8ec">$12.79</div>
<div class="t" style="left:1001px;top:628.84px;font-size:12px;line-height:12px;color:#b6bac0;font-weight:normal;-webkit-text-stroke:0.1px #b6bac0">17.12.2025 09:30</div>
<div class="t" style="left:1187px;top:629.72px;font-size:12.5px;line-height:12.5px;color:#f5585e;font-weight:bold;transform:scaleX(0.845);transform-origin:0 0;letter-spacing:0.2px">SELL</div>
<div class="t" style="left:1303px;top:628.59px;font-size:12.3px;line-height:12.3px;color:#e6e8ec;font-weight:normal;-webkit-text-stroke:0.12px #e6e8ec;transform:scaleX(0.9);transform-origin:0 0;letter-spacing:0.1px">TRADE</div>
<div class="t" style="left:1492px;top:628.84px;font-size:12px;line-height:12px;color:#eceef1;font-weight:normal;-webkit-text-stroke:0.28px #eceef1;letter-spacing:0.2px">$0.0077 / 0,0077 USDT</div>
<div class="t" style="left:1628.0px;width:400px;text-align:center;top:628.84px;font-size:12px;line-height:12px;color:#c9ccd1;font-weight:normal;">-</div>
<svg class="a" style="left:281px;top:690px;" width="32" height="32" viewBox="0 0 32 32"><circle cx="16" cy="16" r="16" fill="#fff"/><g fill="#1fa3b5"><path id="bgp" d="M12.5 5.2 H15.8 L11 11.5 H13.2 L15.4 14.5 H11 L15.8 20.8 H12.5 L6.3 13.8 Q5.8 12.9 6.3 12.2 Z"/><path d="M12.5 5.2 H15.8 L11 11.5 H13.2 L15.4 14.5 H11 L15.8 20.8 H12.5 L6.3 13.8 Q5.8 12.9 6.3 12.2 Z" transform="rotate(180 16 16)"/></g></svg>
<div class="t" style="left:319px;top:699.84px;font-size:12px;line-height:12px;color:#ffffff;font-weight:bold;letter-spacing:0.6px">BItget</div>
<div class="t" style="left:281px;top:736.42px;font-size:12.5px;line-height:12.5px;color:#d2d6dc;font-weight:normal;letter-spacing:0.1px">Bitget Wallet</div>
<div class="t" style="left:493px;top:714.84px;font-size:12px;line-height:12px;color:#e6e8ec;font-weight:normal;-webkit-text-stroke:0.12px #e6e8ec">SOL/USDT</div>
<div class="t" style="left:639px;top:713.84px;font-size:12px;line-height:12px;color:#e6e8ec;font-weight:normal;-webkit-text-stroke:0.15px #e6e8ec">0,10 SOL</div>
<div class="t" style="left:840px;top:714.84px;font-size:12px;line-height:12px;color:#e6e8ec;font-weight:normal;-webkit-text-stroke:0.12px #e6e8ec">$13.20</div>
<div class="t" style="left:1001px;top:713.84px;font-size:12px;line-height:12px;color:#b6bac0;font-weight:normal;-webkit-text-stroke:0.1px #b6bac0">15.12.2025 09:34</div>
<div class="t" style="left:1187px;top:714.72px;font-size:12.5px;line-height:12.5px;color:#f5585e;font-weight:bold;transform:scaleX(0.845);transform-origin:0 0;letter-spacing:0.2px">SELL</div>
<div class="t" style="left:1303px;top:713.59px;font-size:12.3px;line-height:12.3px;color:#e6e8ec;font-weight:normal;-webkit-text-stroke:0.12px #e6e8ec;transform:scaleX(0.9);transform-origin:0 0;letter-spacing:0.1px">TRADE</div>
<div class="t" style="left:1492px;top:713.84px;font-size:12px;line-height:12px;color:#eceef1;font-weight:normal;-webkit-text-stroke:0.28px #eceef1;letter-spacing:0.2px">$0.0079 / 0,0079 USDT</div>
<div class="t" style="left:1628.0px;width:400px;text-align:center;top:713.84px;font-size:12px;line-height:12px;color:#c9ccd1;font-weight:normal;">-</div>
<svg class="a" style="left:281px;top:775px;" width="32" height="32" viewBox="0 0 32 32"><circle cx="16" cy="16" r="16" fill="#fff"/><g fill="#1fa3b5"><path id="bgp" d="M12.5 5.2 H15.8 L11 11.5 H13.2 L15.4 14.5 H11 L15.8 20.8 H12.5 L6.3 13.8 Q5.8 12.9 6.3 12.2 Z"/><path d="M12.5 5.2 H15.8 L11 11.5 H13.2 L15.4 14.5 H11 L15.8 20.8 H12.5 L6.3 13.8 Q5.8 12.9 6.3 12.2 Z" transform="rotate(180 16 16)"/></g></svg>
<div class="t" style="left:319px;top:784.84px;font-size:12px;line-height:12px;color:#ffffff;font-weight:bold;letter-spacing:0.6px">BItget</div>
<div class="t" style="left:281px;top:821.42px;font-size:12.5px;line-height:12.5px;color:#d2d6dc;font-weight:normal;letter-spacing:0.1px">Bitget Wallet</div>
<div class="t" style="left:493px;top:799.84px;font-size:12px;line-height:12px;color:#e6e8ec;font-weight:normal;-webkit-text-stroke:0.12px #e6e8ec">SOL/USDT</div>
<div class="t" style="left:639px;top:798.84px;font-size:12px;line-height:12px;color:#e6e8ec;font-weight:normal;-webkit-text-stroke:0.15px #e6e8ec">0,30 SOL</div>
<div class="t" style="left:840px;top:799.84px;font-size:12px;line-height:12px;color:#e6e8ec;font-weight:normal;-webkit-text-stroke:0.12px #e6e8ec">$39.57</div>
<div class="t" style="left:1001px;top:798.84px;font-size:12px;line-height:12px;color:#b6bac0;font-weight:normal;-webkit-text-stroke:0.1px #b6bac0">15.12.2025 09:33</div>
<div class="t" style="left:1187px;top:799.72px;font-size:12.5px;line-height:12.5px;color:#f5585e;font-weight:bold;transform:scaleX(0.845);transform-origin:0 0;letter-spacing:0.2px">SELL</div>
<div class="t" style="left:1303px;top:798.59px;font-size:12.3px;line-height:12.3px;color:#e6e8ec;font-weight:normal;-webkit-text-stroke:0.12px #e6e8ec;transform:scaleX(0.9);transform-origin:0 0;letter-spacing:0.1px">TRADE</div>
<div class="t" style="left:1492px;top:798.84px;font-size:12px;line-height:12px;color:#eceef1;font-weight:normal;-webkit-text-stroke:0.28px #eceef1;letter-spacing:0.2px">$0.0237 / 0,024 USDT</div>
<div class="t" style="left:1628.0px;width:400px;text-align:center;top:798.84px;font-size:12px;line-height:12px;color:#c9ccd1;font-weight:normal;">-</div>
<svg class="a" style="left:281px;top:860px;" width="32" height="32" viewBox="0 0 32 32"><circle cx="16" cy="16" r="16" fill="#fff"/><g fill="#1fa3b5"><path id="bgp" d="M12.5 5.2 H15.8 L11 11.5 H13.2 L15.4 14.5 H11 L15.8 20.8 H12.5 L6.3 13.8 Q5.8 12.9 6.3 12.2 Z"/><path d="M12.5 5.2 H15.8 L11 11.5 H13.2 L15.4 14.5 H11 L15.8 20.8 H12.5 L6.3 13.8 Q5.8 12.9 6.3 12.2 Z" transform="rotate(180 16 16)"/></g></svg>
<div class="t" style="left:319px;top:869.84px;font-size:12px;line-height:12px;color:#ffffff;font-weight:bold;letter-spacing:0.6px">BItget</div>
<div class="t" style="left:281px;top:906.42px;font-size:12.5px;line-height:12.5px;color:#d2d6dc;font-weight:normal;letter-spacing:0.1px">Bitget Wallet</div>
<div class="t" style="left:493px;top:884.84px;font-size:12px;line-height:12px;color:#e6e8ec;font-weight:normal;-webkit-text-stroke:0.12px #e6e8ec">SOL/USDT</div>
<div class="t" style="left:639px;top:883.84px;font-size:12px;line-height:12px;color:#e6e8ec;font-weight:normal;-webkit-text-stroke:0.15px #e6e8ec">0,30 SOL</div>
<div class="t" style="left:840px;top:884.84px;font-size:12px;line-height:12px;color:#e6e8ec;font-weight:normal;-webkit-text-stroke:0.12px #e6e8ec">$39.56</div>
<div class="t" style="left:1001px;top:883.84px;font-size:12px;line-height:12px;color:#b6bac0;font-weight:normal;-webkit-text-stroke:0.1px #b6bac0">15.12.2025 09:32</div>
<div class="t" style="left:1187px;top:884.72px;font-size:12.5px;line-height:12.5px;color:#f5585e;font-weight:bold;transform:scaleX(0.845);transform-origin:0 0;letter-spacing:0.2px">SELL</div>
<div class="t" style="left:1303px;top:883.59px;font-size:12.3px;line-height:12.3px;color:#e6e8ec;font-weight:normal;-webkit-text-stroke:0.12px #e6e8ec;transform:scaleX(0.9);transform-origin:0 0;letter-spacing:0.1px">TRADE</div>
<div class="t" style="left:1492px;top:883.84px;font-size:12px;line-height:12px;color:#eceef1;font-weight:normal;-webkit-text-stroke:0.28px #eceef1;letter-spacing:0.2px">$0.0237 / 0,024 USDT</div>
<div class="t" style="left:1628.0px;width:400px;text-align:center;top:883.84px;font-size:12px;line-height:12px;color:#c9ccd1;font-weight:normal;">-</div>
<svg class="a" style="left:281px;top:945px;" width="32" height="32" viewBox="0 0 32 32"><circle cx="16" cy="16" r="16" fill="#fff"/><g fill="#1fa3b5"><path id="bgp" d="M12.5 5.2 H15.8 L11 11.5 H13.2 L15.4 14.5 H11 L15.8 20.8 H12.5 L6.3 13.8 Q5.8 12.9 6.3 12.2 Z"/><path d="M12.5 5.2 H15.8 L11 11.5 H13.2 L15.4 14.5 H11 L15.8 20.8 H12.5 L6.3 13.8 Q5.8 12.9 6.3 12.2 Z" transform="rotate(180 16 16)"/></g></svg>
<div class="t" style="left:319px;top:954.84px;font-size:12px;line-height:12px;color:#ffffff;font-weight:bold;letter-spacing:0.6px">BItget</div>
<div class="t" style="left:281px;top:991.42px;font-size:12.5px;line-height:12.5px;color:#d2d6dc;font-weight:normal;letter-spacing:0.1px">Bitget Wallet</div>
<div class="t" style="left:493px;top:969.84px;font-size:12px;line-height:12px;color:#e6e8ec;font-weight:normal;-webkit-text-stroke:0.12px #e6e8ec">XRP/USDT</div>
<div class="t" style="left:639px;top:968.84px;font-size:12px;line-height:12px;color:#e6e8ec;font-weight:normal;-webkit-text-stroke:0.15px #e6e8ec">6 XRP</div>
<div class="t" style="left:840px;top:969.84px;font-size:12px;line-height:12px;color:#e6e8ec;font-weight:normal;-webkit-text-stroke:0.12px #e6e8ec">$11.97</div>
<div class="t" style="left:1001px;top:968.84px;font-size:12px;line-height:12px;color:#b6bac0;font-weight:normal;-webkit-text-stroke:0.1px #b6bac0">15.12.2025 09:30</div>
<div class="t" style="left:1187px;top:969.72px;font-size:12.5px;line-height:12.5px;color:#f5585e;font-weight:bold;transform:scaleX(0.845);transform-origin:0 0;letter-spacing:0.2px">SELL</div>
<div class="t" style="left:1303px;top:968.59px;font-size:12.3px;line-height:12.3px;color:#e6e8ec;font-weight:normal;-webkit-text-stroke:0.12px #e6e8ec;transform:scaleX(0.9);transform-origin:0 0;letter-spacing:0.1px">TRADE</div>
<div class="t" style="left:1492px;top:968.84px;font-size:12px;line-height:12px;color:#eceef1;font-weight:normal;-webkit-text-stroke:0.28px #eceef1;letter-spacing:0.2px">$0.0072 / 0,0072 USDT</div>
<div class="t" style="left:1628.0px;width:400px;text-align:center;top:968.84px;font-size:12px;line-height:12px;color:#c9ccd1;font-weight:normal;">-</div>
<svg class="a" style="left:281px;top:1030px;" width="32" height="32" viewBox="0 0 32 32"><circle cx="16" cy="16" r="16" fill="#fff"/><path d="M5.7 11.5 L8.3 8.2 Q12 9 15.7 12.2 Q19.5 9 23.1 8.2 L25.9 11.5 Q21 12.5 18.7 16.3 Q21 20 25.9 20.8 L23.1 24.1 Q19.5 23 15.7 20 Q12 23 8.3 24.1 L5.7 20.8 Q10.5 20 12.8 16.3 Q10.5 12.5 5.7 11.5 Z" fill="#2b55ff"/></svg>
<div class="t" style="left:319px;top:1039.84px;font-size:12px;line-height:12px;color:#ffffff;font-weight:bold;;letter-spacing:0.332px">BIngX</div>
<div class="t" style="left:281px;top:1076.42px;font-size:12.5px;line-height:12.5px;color:#d2d6dc;font-weight:normal;;letter-spacing:0.089px">Bingx Wallet</div>
<div class="t" style="left:493px;top:1054.84px;font-size:12px;line-height:12px;color:#e6e8ec;font-weight:normal;-webkit-text-stroke:0.12px #e6e8ec">ALGO/USDT</div>
<div class="t" style="left:639px;top:1053.84px;font-size:12px;line-height:12px;color:#e6e8ec;font-weight:normal;-webkit-text-stroke:0.15px #e6e8ec">104,070 ALGO</div>
<div class="t" style="left:840px;top:1054.84px;font-size:12px;line-height:12px;color:#e6e8ec;font-weight:normal;-webkit-text-stroke:0.12px #e6e8ec">$13.91</div>
<div class="t" style="left:1001px;top:1053.84px;font-size:12px;line-height:12px;color:#b6bac0;font-weight:normal;-webkit-text-stroke:0.1px #b6bac0">09.12.2025 16:30</div>
<div class="t" style="left:1187px;top:1054.72px;font-size:12.5px;line-height:12.5px;color:#f5585e;font-weight:bold;transform:scaleX(0.845);transform-origin:0 0;letter-spacing:0.2px">SELL</div>
<div class="t" style="left:1303px;top:1053.59px;font-size:12.3px;line-height:12.3px;color:#e6e8ec;font-weight:normal;-webkit-text-stroke:0.12px #e6e8ec;transform:scaleX(0.9);transform-origin:0 0;letter-spacing:0.1px">TRADE</div>
<div class="t" style="left:1492px;top:1053.84px;font-size:12px;line-height:12px;color:#eceef1;font-weight:normal;-webkit-text-stroke:0.28px #eceef1;letter-spacing:0.2px">$0.0139 / 0,014 USDT</div>
<div class="t" style="left:1628.0px;width:400px;text-align:center;top:1053.84px;font-size:12px;line-height:12px;color:#c9ccd1;font-weight:normal;">-</div>
</body></html>
